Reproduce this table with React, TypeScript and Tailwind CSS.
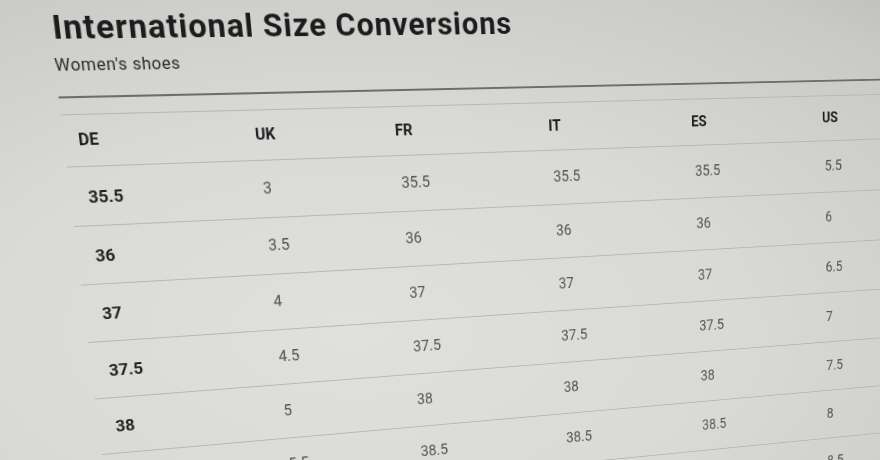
const headers = ['DE', 'UK', 'FR', 'IT', 'ES', 'US'];

const rows = [
  ['35.5', '3', '35.5', '35.5', '35.5', '5.5'],
  ['36', '3.5', '36', '36', '36', '6'],
  ['37', '4', '37', '37', '37', '6.5'],
  ['37.5', '4.5', '37.5', '37.5', '37.5', '7'],
  ['38', '5', '38', '38', '38', '7.5'],
  ['38.5', '5.5', '38.5', '38.5', '38.5', '8'],
  ['39', '6', '39', '39', '39', '8.5'],
];

const cols = 'grid grid-cols-[175px_147px_171px_169px_164px_1fr] pl-[14px]';

export default function App() {
  return (
    <div className="w-[880px] h-[460px] overflow-hidden bg-[radial-gradient(ellipse_110%_115%_at_40%_72%,#e0e1dc_0%,#d9dad5_40%,#c9cac6_75%,#b0afae_100%)]">
      {/* photo of a screen: whole page seen at an angle */}
      <div className="w-[1000px] origin-top-left [transform:matrix3d(1.094,-0.004,0,0.0002,0.1408,1.0976,0,0.00016,0,0,1,0,0,0,0,1)] font-['Roboto',sans-serif]">
        <h1 className="pt-[9px] pl-[45px] text-[32px] leading-none font-bold tracking-[1px] text-[#1b1c1e]">
          International Size Conversions
        </h1>
        <p className="mt-[12px] pl-[43px] text-[16.5px] leading-none tracking-[0.5px] text-[#2a2b2c]">
          Women's shoes
        </p>
        <div className="ml-[43px] mt-[20px] border-t-2 border-[#6d6e6b]" />

        <div className="ml-[43px] mt-[15px] border-t border-[#b5b7b2]">
          <div className={`${cols} h-[50px] items-center border-b border-[#b5b7b2]`}>
            {headers.map((h) => (
              <div key={h} className="text-[16px] font-bold text-[#1d1e20]">
                {h}
              </div>
            ))}
          </div>
          {rows.map((r) => (
            <div key={r[0]} className={`${cols} h-[58px] items-center border-b border-[#b5b7b2]`}>
              {r.map((v, i) => (
                <div
                  key={i}
                  className={
                    i === 0
                      ? 'pl-[3px] pt-[3px] text-[17px] font-bold text-[#1f2022]'
                      : 'pl-[3px] text-[16px] text-[#515356]'
                  }
                >
                  {v}
                </div>
              ))}
            </div>
          ))}
        </div>
      </div>
    </div>
  );
}
